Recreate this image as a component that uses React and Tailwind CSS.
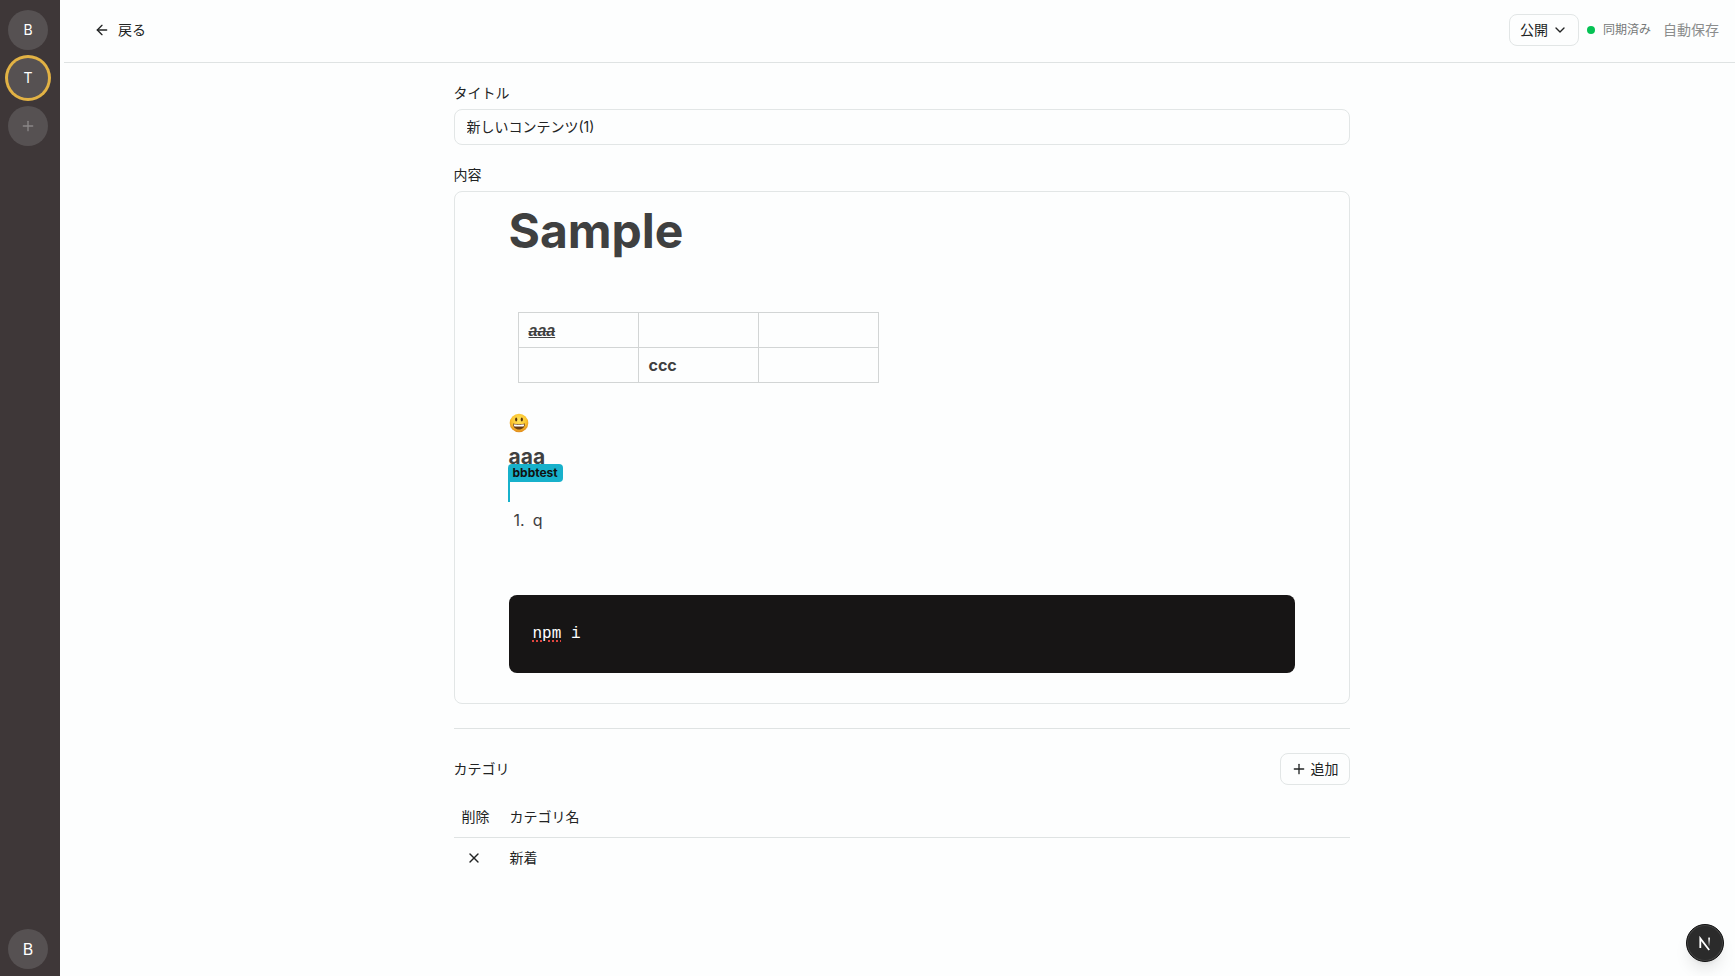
import { ArrowLeft, ChevronDown, Plus, X } from "lucide-react";

const workspaces = [
  { name: "B", active: false },
  { name: "T", active: true },
];

const categories = [{ id: 1, name: "新着" }];

function Sidebar() {
  return (
    <nav
      aria-label="ワークスペース"
      className="flex w-15 shrink-0 flex-col items-start gap-2 bg-[#3e3738] px-2 pt-2.5 pb-[7px] text-sm text-white"
    >
      {workspaces.map((w) => (
        <button
          key={w.name}
          type="button"
          className={
            w.active
              ? "size-10 rounded-full bg-[#565152] ring-3 ring-[#e2b244]"
              : "size-10 rounded-full bg-[#565152]"
          }
        >
          {w.name}
        </button>
      ))}
      <button
        type="button"
        aria-label="ワークスペースを追加"
        className="flex size-10 items-center justify-center rounded-full bg-[#565152] text-[#8b8788]"
      >
        <Plus className="size-4" strokeWidth={2} />
      </button>
      <button type="button" className="mt-auto size-10 rounded-full bg-[#565152] text-base">
        B
      </button>
    </nav>
  );
}

function Header() {
  return (
    <header className="flex items-center justify-between border-b border-[#dfe3e3] pt-3.5 pr-4 pb-4 pl-7.5 text-sm">
      <a href="#back" className="flex items-center gap-2">
        <ArrowLeft className="size-4" />
        戻る
      </a>
      <div className="flex items-center">
        <button
          type="button"
          className="flex h-8 items-center gap-1 rounded-lg border border-[#e2e6e6] px-2.5"
        >
          公開
          <ChevronDown className="size-4" />
        </button>
        <span className="ml-2 size-2 rounded-full bg-[#05c254]" />
        <span className="ml-2 text-xs text-[#757878]">同期済み</span>
        <span className="ml-3 text-[#8b8d8d]">自動保存</span>
      </div>
    </header>
  );
}

function Smiley() {
  return (
    <svg role="img" aria-label="😃" viewBox="0 0 20 20" className="size-5">
      <defs>
        <radialGradient id="face" cx="50%" cy="35%" r="65%">
          <stop offset="0" stopColor="#ffe65c" />
          <stop offset="0.6" stopColor="#fbc42f" />
          <stop offset="1" stopColor="#e08a1e" />
        </radialGradient>
      </defs>
      <circle cx="10" cy="10" r="9.3" fill="url(#face)" />
      <ellipse cx="7.2" cy="6.6" rx="1.1" ry="2" fill="#5a3510" />
      <ellipse cx="12.8" cy="6.6" rx="1.1" ry="2" fill="#5a3510" />
      <path d="M4 10.6c2 .7 10 .7 12 0 0 3.8-2.6 6-6 6s-6-2.200-6-6z" fill="#6b3d12" />
      <path d="M4.700 11.200c2.300.6 8.300.6 10.600 0-.2 1.200-.5 1.900-.9 2.200H5.600c-.4-.3-.8-1-.9-2.200z" fill="#fff" />
    </svg>
  );
}

function Editor() {
  const cell = "h-[35px] w-[120px] border border-[#d2d5d5] px-2.5 text-left font-bold";
  return (
    <div
      id="content"
      role="group"
      aria-labelledby="content-label"
      className="rounded-lg border border-[#e2e6e6] px-[54px] pt-2.5 text-base leading-6 text-[#3f4040]"
    >
      <h1 className="text-5xl leading-[58px] font-bold">Sample</h1>
      <table className="mt-[52px] ml-[9px] table-fixed border-collapse">
        <tbody>
          <tr>
            <td className={cell}>
              <em className="font-['Liberation_Sans',sans-serif] underline">
                <s>aaa</s>
              </em>
            </td>
            <td className={cell} />
            <td className={cell} />
          </tr>
          <tr>
            <td className={cell} />
            <td className={cell}>ccc</td>
            <td className={cell} />
          </tr>
        </tbody>
      </table>
      <p className="mt-7 flex h-6 items-center">
        <Smiley />
      </p>
      <h3 className="mt-1.5 text-[21px] leading-[31px] font-bold">aaa</h3>
      <p className="relative mt-1.5 h-6">
        <span className="absolute bottom-0 -left-px h-6 w-0.5 bg-[#17b1cb]" />
        <span className="absolute -top-3.5 -left-px rounded-sm rounded-bl-none bg-[#17b1cb] px-[5px] text-xs leading-[18px] font-bold text-[#111]">
          bbbtest
        </span>
      </p>
      <ol className="mt-1.5 pl-[5px]">
        <li className="flex gap-2 before:content-['1.']">q</li>
      </ol>
      <pre className="mt-[63px] rounded-lg bg-[#171515] p-6 font-['Noto_Sans_Mono','DejaVu_Sans_Mono',monospace] leading-[30px] text-white">
        <code className="block h-[30px]">
          <span className="underline decoration-[#e0453f] decoration-dotted decoration-2 underline-offset-2">
            npm
          </span>{" "}
          i
        </code>
      </pre>
      <p className="h-[30px]" />
    </div>
  );
}

function Categories() {
  return (
    <section className="mt-6 border-t border-[#dfe3e3] pt-6">
      <div className="flex items-center justify-between">
        <h2>カテゴリ</h2>
        <button
          type="button"
          className="flex h-8 items-center gap-1 rounded-lg border border-[#e2e6e6] px-2.5"
        >
          <Plus className="size-4" />
          追加
        </button>
      </div>
      <table className="mt-3 w-full text-left">
        <thead>
          <tr className="h-10 border-b border-[#dfe3e3]">
            <th className="w-12 px-2 font-normal whitespace-nowrap">削除</th>
            <th className="px-2 font-normal">カテゴリ名</th>
          </tr>
        </thead>
        <tbody>
          {categories.map((c) => (
            <tr key={c.id} className="h-[42px]">
              <td className="px-3">
                <button type="button" aria-label={`${c.name}を削除`} className="block">
                  <X className="size-4" />
                </button>
              </td>
              <td className="px-2">{c.name}</td>
            </tr>
          ))}
        </tbody>
      </table>
    </section>
  );
}

export default function App() {
  return (
    <div className="flex min-h-screen bg-[#fdfefe] font-['Inter','Noto_Sans_CJK_JP',sans-serif] text-[#222424]">
      <Sidebar />
      <div className="ml-1 min-w-0 flex-1">
        <Header />
        <main className="pl-1">
          <div className="mx-auto max-w-4xl pt-5 text-sm">
            <label htmlFor="title" className="block leading-5">
              タイトル
            </label>
            <input
              id="title"
              defaultValue="新しいコンテンツ(1)"
              className="mt-1.5 mb-5 block h-9 w-full rounded-lg border border-[#e2e6e6] bg-transparent px-3 pb-0.5"
            />
            <div id="content-label" className="mb-1.5 leading-5">
              内容
            </div>
            <Editor />
            <Categories />
          </div>
        </main>
      </div>
      <button
        type="button"
        aria-label="開発ツール"
        className="fixed right-[11px] bottom-3.5 flex size-[38px] items-center justify-center rounded-full border border-[#111] bg-[#2b2b2b] shadow-lg ring-1 ring-[#444] ring-inset"
      >
        <svg viewBox="0 0 16 16" className="size-4" fill="none" strokeWidth="1.800">
          <defs>
            <linearGradient id="stem" x1="0" y1="0" x2="0" y2="1">
              <stop offset="0" stopColor="#fff" />
              <stop offset="1" stopColor="#fff" stopOpacity="0" />
            </linearGradient>
          </defs>
          <path d="M3.300 13V3.400L12.200 15" stroke="#fff" />
          <rect x="11.200" y="2.600" width="1.800" height="9" fill="url(#stem)" />
        </svg>
      </button>
    </div>
  );
}
